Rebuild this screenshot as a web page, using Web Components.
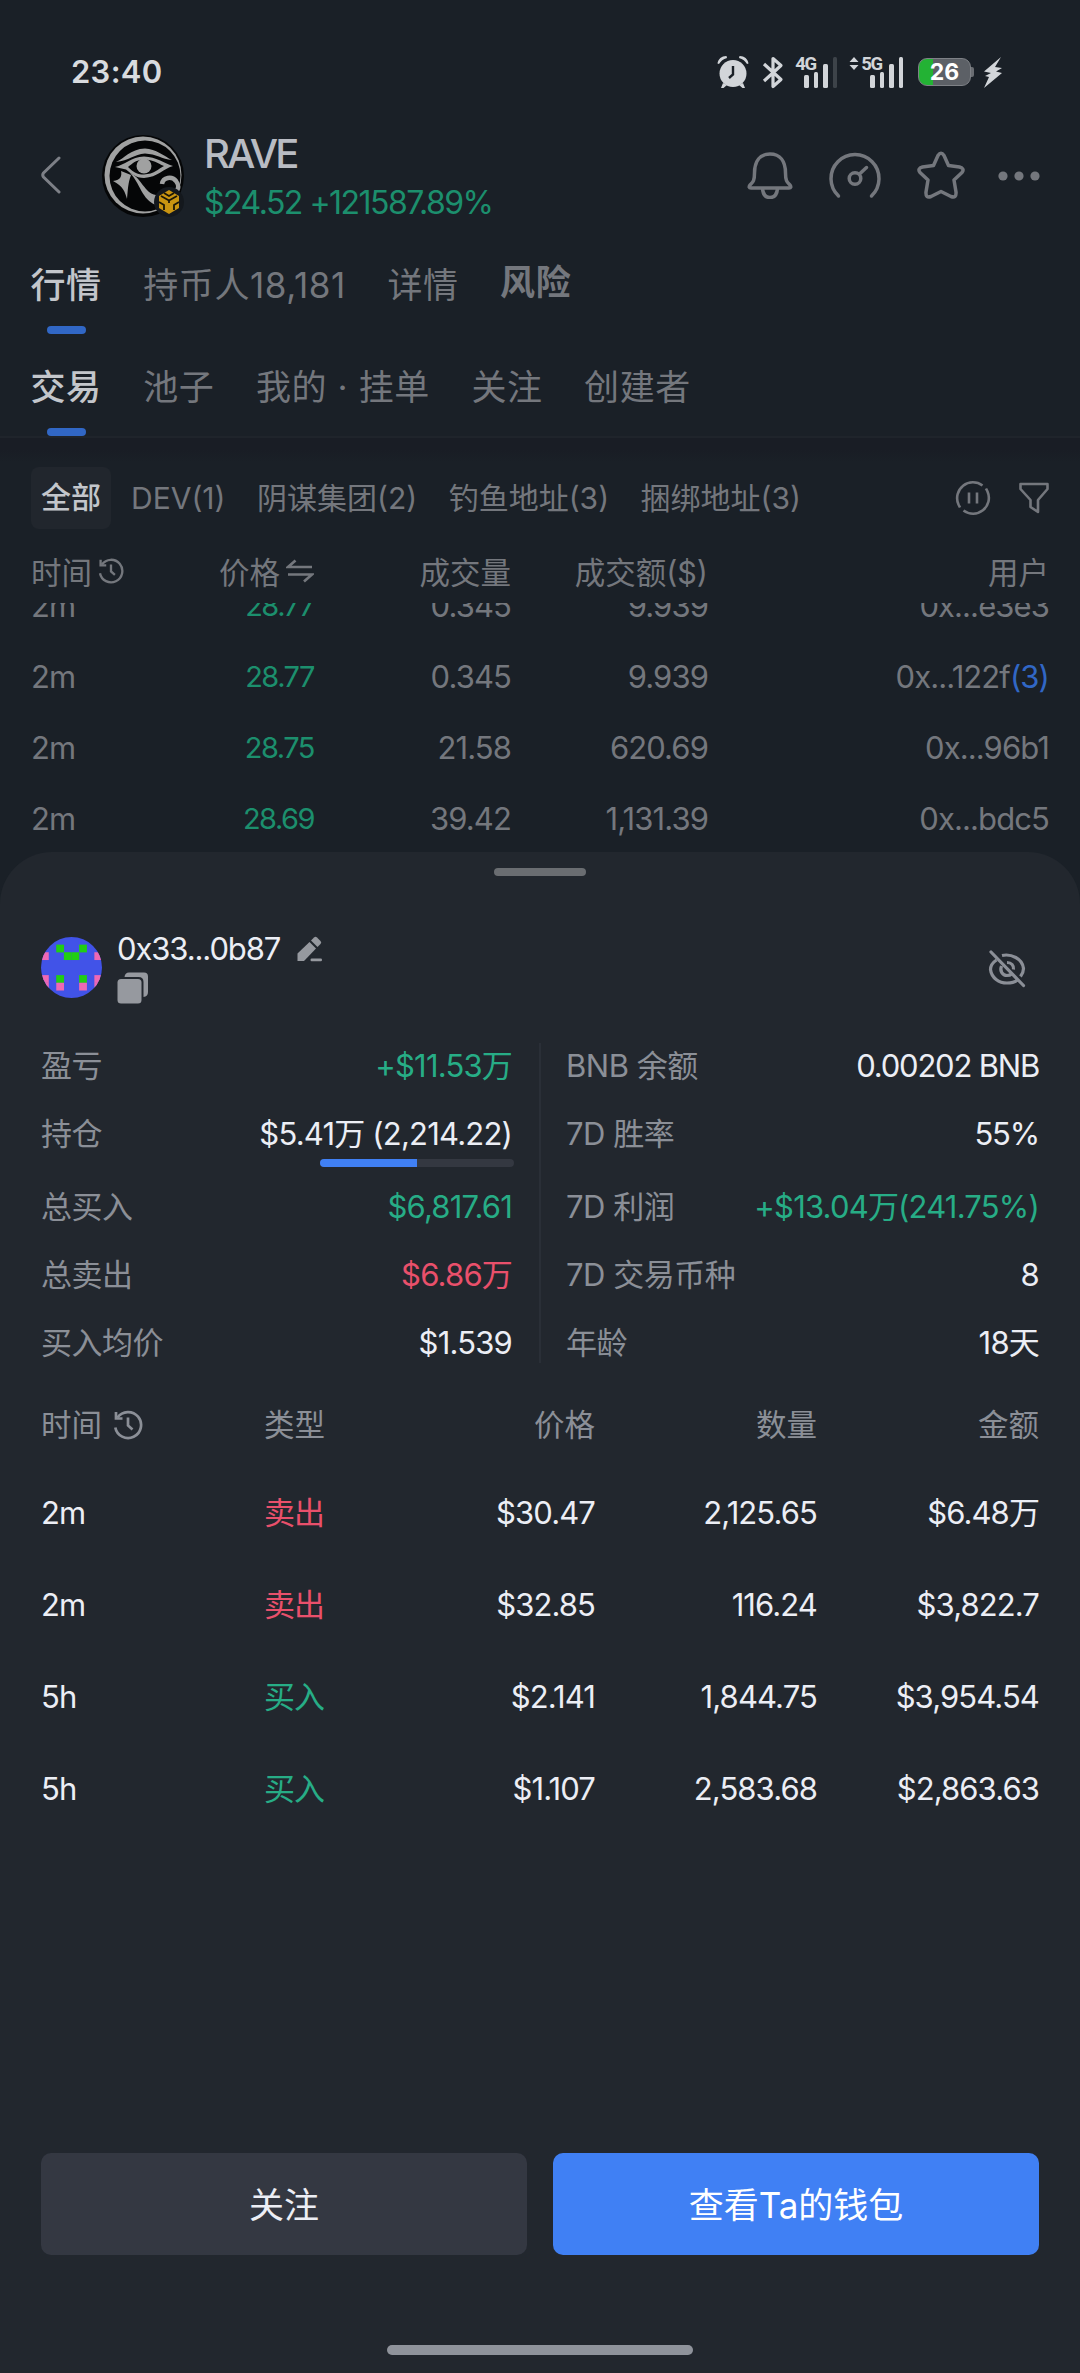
<!DOCTYPE html>
<html lang="zh-CN">
<head>
<meta charset="UTF-8">
<meta name="viewport" content="width=device-width, initial-scale=1.0">
<title>RAVE</title>
<style>
    body {
        margin: 0;
        width: 1080px;
        height: 2373px;
        overflow: hidden;
        background: #1a2027;
        color: #74777d;
        font-family: Inter, "Noto Sans CJK SC", sans-serif;
        font-size: 31px;
        line-height: 40px;
        letter-spacing: -0.9px;
        --green: #1c8f6d;
        --blue: #3167c5;
        --strong: #c3c6cb;
    }
    wallet-sheet {
        --green: #27ad86;
        --red: #e9506b;
        --blue: #4080f4;
        --strong: #eceef5;
        color: #8b8f97;
    }
</style>
</head>
<body>
<status-bar time="23:40" battery="26"></status-bar>
<token-header name="RAVE" price="$24.52 +121587.89%"></token-header>
<tab-bar>
    <tab-item active>行情</tab-item>
    <tab-item>持币人18,181</tab-item>
    <tab-item>详情</tab-item>
    <tab-item risk>风险</tab-item>
</tab-bar>
<tab-bar line>
    <tab-item active>交易</tab-item>
    <tab-item>池子</tab-item>
    <tab-item>我的 · 挂单</tab-item>
    <tab-item>关注</tab-item>
    <tab-item>创建者</tab-item>
</tab-bar>
<filter-bar></filter-bar>
<trade-list></trade-list>
<wallet-sheet>
    <wallet-head address="0x33...0b87"></wallet-head>
    <wallet-stats></wallet-stats>
    <wallet-trades></wallet-trades>
    <sheet-actions>
        <sheet-button>关注</sheet-button>
        <sheet-button primary>查看Ta的钱包</sheet-button>
    </sheet-actions>
</wallet-sheet>

<script>
// icon name -> [width, height, markup]
const ICONS = {
    alarm: [32, 34, `<g fill="#d2d5d9"><circle cx="16" cy="18.500" r="13.500"/><path d="M0.500 8.500C1 4 5 0.800 9.500 1L10 3C6 4 4 6 2 9ZM31.500 8.500C31 4 27 0.800 22.500 1L22 3C26 4 28 6 30 9Z"/><path d="M6 28L4 33L6.500 33L10 30ZM26 28L28 33L25.500 33L22 30Z"/></g><path d="M16 11V19.500L12 23" fill="none" stroke="#1a2027" stroke-width="2.400"/>`],
    bluetooth: [22, 33, `<path d="M2 8L19 23.500L11 30.500V2.500L19 9.500L2 25" fill="none" stroke="#d2d5d9" stroke-width="3.200" stroke-linejoin="round"/>`],
    bolt: [20, 33, `<path d="M18 1L1 15.500L8 17L2 20L6 21L1 32L19 17L13 15.500L19 12L12 11Z" fill="#d2d5d9"/>`],
    back: [22, 38, `<path d="M19 2L3.500 17Q2 19 3.500 21L19 36" fill="none" stroke="#7d8087" stroke-width="3" stroke-linecap="round"/>`],
    bell: [46, 48, `<g fill="none" stroke="#74777d" stroke-width="3.500" stroke-linejoin="round"><path d="M7.500 22C7.500 10 13 3 23 3S38.500 10 38.500 22C38.500 30 40 31 43 34Q45 37 42 37H4Q1 37 3 34C6 31 7.500 30 7.500 22Z"/><path d="M15.500 37.500C16 43.500 19 46.500 23 46.500S30 43.500 30.500 37.500"/></g>`],
    gauge: [52, 48, `<g fill="none" stroke="#74777d" stroke-width="3.500" stroke-linecap="round"><path d="M9.500 45A24 24 0 1 1 42.500 45"/><circle cx="26" cy="27.500" r="5.800"/><path d="M30.500 23L37.500 16.500"/></g>`],
    star: [48, 48, `<path d="M21 4.500Q24 0 27 4.500L31.500 14.500L42.500 16Q48 17.500 45 21.500L37 29L39 41Q39.500 47.500 34 45.500L24 40.500L14 45.500Q8.500 47.500 9 41L11 29L3 21.500Q0 17.500 5.500 16L16.500 14.500Z" fill="none" stroke="#74777d" stroke-width="3.500" stroke-linejoin="round"/>`],
    more: [42, 10, `<g fill="#74777d"><circle cx="5" cy="5" r="4.600"/><circle cx="21" cy="5" r="4.600"/><circle cx="37" cy="5" r="4.600"/></g>`],
    pause: [36, 36, `<g fill="none" stroke="#74777d" stroke-width="2.600"><path d="M27.500 5.500A15.800 15.800 0 0 0 3.500 24.500L5 27.500M8.500 30.500A15.800 15.800 0 0 0 32.500 11.500L31 8.500"/><path d="M14 12.500V23.500M22 12.500V23.500"/></g>`],
    filter: [30, 34, `<path d="M1.500 3H28.500V8L19 19V31L11.500 26V19L1.500 8Z" fill="none" stroke="#74777d" stroke-width="2.600" stroke-linejoin="round"/>`],
    swap: [28, 24, `<path d="M26 8H2L9.500 1.500M2 15.500H26L18 22.500" fill="none" stroke="#74777d" stroke-width="2.700"/>`],
    history: [30, 30, `<g fill="none" stroke="currentColor" stroke-width="2.700"><path d="M4.500 7.500A13 13 0 1 1 2.300 17.500"/><path d="M3 2V8.500H9.500"/><path d="M15 7.500V15.500L19.500 19.500"/></g>`],
    pencil: [26, 27, `<g fill="#96999f"><path d="M0.500 25V17.500L12.500 6L19 12.500L7.500 24.500Q7 25 6 25Z"/><path d="M14 4.500L17 1.500Q18.500 0.200 20 1.500L23.500 5Q25 6.500 23.500 8L20.500 11Z"/><rect x="13.500" y="22.500" width="11.500" height="2.800" rx="1.200"/></g>`],
    copy: [32, 32, `<g fill="#96999f"><path d="M7.500 5Q8 0.500 12 0.500H27Q31 0.500 31 4.500V20Q31 24.500 26.500 25V10Q26.500 5 21.500 5Z"/><rect x="0.500" y="7" width="24" height="24.500" rx="3.500"/></g>`],
    eye: [38, 38, `<g fill="none" stroke="#8b8f97" stroke-width="3.200"><path d="M8.500 10C4 13 2.500 16.500 2.500 19.500C3.500 28 11 33 19 33C23 33 27 32 29.500 30M14 5.500C23 3.500 34.500 8.500 35.500 18.500C35.500 22 34 24.500 32.500 26.500"/><path d="M13.500 16C11.500 21 14.500 25.500 19 25.500C21 25.500 22.500 25 23.500 24M19 12.500C23.500 12.500 26 15.500 25.500 19.500"/><path d="M3 2L35.500 35.500" stroke-linecap="round"/></g>`]
};

class SvgIcon extends HTMLElement {
    connectedCallback() {
        const [w, h, body] = ICONS[this.getAttribute("name")];
        const width = this.getAttribute("width") || w;
        this.attachShadow({ mode: "open" }).innerHTML = `
            <style>
                :host { display: block; flex: none; line-height: 0; }
            </style>
            <svg width="${width}" height="${h * width / w}" viewBox="0 0 ${w} ${h}">${body}</svg>
        `;
    }
}
customElements.define("svg-icon", SvgIcon);

// mobile signal: network label over four bars
class SignalBars extends HTMLElement {
    connectedCallback() {
        const level = Number(this.getAttribute("level"));
        const heights = [13, 16, 24, 31];
        this.attachShadow({ mode: "open" }).innerHTML = `
            <style>
                :host { display: flex; align-items: flex-end; gap: 5px; height: 31px; position: relative; }
                i { width: 4.5px; border-radius: 1.5px; background: #d2d5d9; }
                i.off { background: #3d4349; }
                b { position: absolute; right: 21px; top: -2px; font: 700 18.5px/18px Roboto, sans-serif; letter-spacing: -1.2px; color: #d2d5d9; display: flex; align-items: center; gap: 2px; }
            </style>
            <b>${this.hasAttribute("data-active") ? `<svg width="10" height="13" viewBox="0 0 10 13"><path d="M5 0L9.500 5H0.500ZM5 13L9.500 8H0.500Z" fill="#d2d5d9"/></svg>` : ""}${this.getAttribute("label")}</b>
            ${heights.map((h, i) => `<i class="${i < level ? "" : "off"}" style="height:${h}px"></i>`).join("")}
        `;
    }
}
customElements.define("signal-bars", SignalBars);

class StatusBar extends HTMLElement {
    connectedCallback() {
        this.attachShadow({ mode: "open" }).innerHTML = `
            <style>
                :host { display: flex; align-items: flex-start; box-sizing: border-box; height: 118px; padding: 52px 77px 0 71px; }
                .time { flex: 1; font-weight: 600; letter-spacing: 0.3px; color: #d8dbdf; }
                .row { display: flex; align-items: center; height: 34px; margin-top: 3px; }
                .battery { display: flex; align-items: center; margin-left: 15px; }
                .cell { box-sizing: border-box; width: 53px; height: 28px; border-radius: 9px; border: 1px solid #7e8186; background: linear-gradient(90deg, #23b234 28%, #5c6066 28%); color: #fff; text-align: center; font: 700 23px/26px Inter, sans-serif; letter-spacing: 0; }
                .tip { width: 3px; height: 10px; border-radius: 0 2px 2px 0; background: #6a6d72; }
            </style>
            <span class="time">${this.getAttribute("time")}</span>
            <div class="row">
                <svg-icon name="alarm"></svg-icon>
                <svg-icon name="bluetooth" style="margin-left:13px"></svg-icon>
                <signal-bars label="4G" level="3" style="margin-left:20px"></signal-bars>
                <signal-bars label="5G" level="4" data-active style="margin-left:33px"></signal-bars>
                <div class="battery"><div class="cell">${this.getAttribute("battery")}</div><div class="tip"></div></div>
                <svg-icon name="bolt" style="margin-left:9px"></svg-icon>
            </div>
        `;
    }
}
customElements.define("status-bar", StatusBar);

class TokenHeader extends HTMLElement {
    connectedCallback() {
        this.attachShadow({ mode: "open" }).innerHTML = `
            <style>
                :host { display: flex; align-items: center; box-sizing: border-box; height: 114px; padding: 0 40px; }
                .logo { margin: 2px 0 0 40px; line-height: 0; }
                .text { flex: 1; margin: 5px 0 0 19px; }
                .name { font-size: 40px; line-height: 50px; font-weight: 500; letter-spacing: -2.8px; color: #b9bcc3; }
                .price { font-size: 32px; line-height: 48px; letter-spacing: -1.5px; color: var(--green); white-space: nowrap; }
                .icons { display: flex; align-items: center; gap: 36px; }
            </style>
            <svg-icon name="back"></svg-icon>
            <div class="logo">
                <svg width="83" height="83" viewBox="0 0 83 83">
                    <circle cx="41" cy="41" r="41" fill="#050607"/>
                    <circle cx="41" cy="40" r="38.500" fill="#a0a1a1"/>
                    <circle cx="43" cy="41" r="35.500" fill="#050607"/>
                    <g fill="#a0a1a1">
                        <path d="M14 27C22 24 28 14 43 13.500C54 14 62 21 70 25C60 24 54 19 43 18.500C32 19 27 26 14 27Z"/>
                        <path fill-rule="evenodd" d="M13 32C23 30 29 22 42 21.500C55 22 61 28 71 31C61 34 56 42 42 43C34 43 28 38 24 34.500ZM26 32C32 38 36 39.500 42 39.500C52 39 56 34 62 31C55 28 52 25 42 24.500C33 25 30 29 26 32Z"/>
                        <circle cx="42" cy="31" r="7.500"/>
                        <path d="M19 36L29 40C26 48 26 54 25 64C23 57 21 51 11 46C19 45 20 41 19 36Z"/>
                        <path d="M28 38C40 43 42 58 54 60V70C40 65 38 48 28 38Z"/>
                    </g>
                    <path d="M60 49C61 42 70 41 74 46C77 50 77 54 74 56" fill="none" stroke="#a0a1a1" stroke-width="4.500"/>
                    <circle cx="67" cy="67" r="15" fill="#14181d"/>
                    <path d="M67 55L77 61V73L67 79L57 73V61Z" fill="#c99411"/>
                    <path d="M59 61L67 65.500L75 61M57 67L62 70V75M77 67L72 70V75M67 65.500V68M62 58L67 61L72 58" fill="none" stroke="#1a1608" stroke-width="1.800"/>
                </svg>
            </div>
            <div class="text">
                <div class="name">${this.getAttribute("name")}</div>
                <div class="price">${this.getAttribute("price")}</div>
            </div>
            <div class="icons">
                <svg-icon name="bell"></svg-icon>
                <svg-icon name="gauge"></svg-icon>
                <svg-icon name="star"></svg-icon>
                <svg-icon name="more" style="margin-left:-3px"></svg-icon>
            </div>
        `;
    }
}
customElements.define("token-header", TokenHeader);

class TabBar extends HTMLElement {
    connectedCallback() {
        this.attachShadow({ mode: "open" }).innerHTML = `
            <style>
                :host { display: flex; gap: 41.5px; height: 102px; padding-left: 30.5px; }
                :host([line]) { border-bottom: 2px solid #1f242b; }
            </style>
            <slot></slot>
        `;
    }
}
customElements.define("tab-bar", TabBar);

class TabItem extends HTMLElement {
    connectedCallback() {
        this.attachShadow({ mode: "open" }).innerHTML = `
            <style>
                :host { display: flex; flex-direction: column; align-items: center; justify-content: space-between; height: 102px; box-sizing: border-box; padding-top: 28px; font-size: 35px; line-height: 50px; letter-spacing: 0.6px; white-space: nowrap; }
                :host([active]) { color: var(--strong); font-weight: 500; }
                :host([risk]) { padding-top: 25px; font-weight: 700; }
                i { width: 39px; height: 8px; border-radius: 4px; }
                :host([active]) i { background: var(--blue); }
            </style>
            <span><slot></slot></span>
            <i></i>
        `;
    }
}
customElements.define("tab-item", TabItem);

class FilterBar extends HTMLElement {
    constructor() {
        super();
        this.attachShadow({ mode: "open" });
        this.filters = ["DEV(1)", "阴谋集团(2)", "钓鱼地址(3)", "捆绑地址(3)"];
    }
    connectedCallback() {
        this.shadowRoot.innerHTML = `
            <style>
                :host { display: flex; align-items: center; height: 62px; padding: 29px 31px 0; font-size: 30px; letter-spacing: 0; white-space: nowrap; background: linear-gradient(#191d25 12px, transparent 24px); }
                .all { width: 80px; height: 62px; line-height: 61px; border-radius: 8px; background: #21262d; color: var(--strong); text-align: center; font-weight: 500; margin-right: 20px; }
                .items { flex: 1; display: flex; gap: 31.5px; }
                .icons { display: flex; align-items: center; gap: 28px; }
            </style>
            <div class="all">全部</div>
            <div class="items">${this.filters.map(f => `<span>${f}</span>`).join("")}</div>
            <div class="icons"><svg-icon name="pause"></svg-icon><svg-icon name="filter"></svg-icon></div>
        `;
    }
}
customElements.define("filter-bar", FilterBar);

class TradeList extends HTMLElement {
    constructor() {
        super();
        this.attachShadow({ mode: "open" });
        this.rows = [
            ["2m", "28.77", "0.345", "9.939", "0x...e3e3"],
            ["2m", "28.77", "0.345", "9.939", "0x...122f", "(3)"],
            ["2m", "28.75", "21.58", "620.69", "0x...96b1"],
            ["2m", "28.69", "39.42", "1,131.39", "0x...bdc5"]
        ];
    }
    connectedCallback() {
        this.shadowRoot.innerHTML = `
            <style>
                :host { display: block; }
                .row { display: grid; grid-template-columns: 120px 163px 197px 197px 1fr; align-items: center; padding: 0 31px; height: 71px; text-align: right; white-space: nowrap; }
                .row > :first-child { text-align: left; justify-content: flex-start; }
                .head { height: 61px; padding-top: 13px; font-size: 30.5px; letter-spacing: 0; }
                .head span { display: flex; align-items: center; justify-content: flex-end; gap: 6px; }
                .head svg-icon { margin-top: -3px; }
                .body { height: 249px; overflow: hidden; }
                .body .row:first-child { margin-top: -33px; }
                .price { color: var(--green); font-size: 29px; letter-spacing: -1.5px; }
                b { font-weight: 400; color: var(--blue); }
            </style>
            <div class="row head">
                <span>时间<svg-icon name="history" width="26"></svg-icon></span>
                <span>价格<svg-icon name="swap"></svg-icon></span>
                <span>成交量</span><span>成交额($)</span><span>用户</span>
            </div>
            <div class="body">
                ${this.rows.map(r => `
                    <div class="row">
                        <span>${r[0]}</span><span${" "}class="price">${r[1]}</span><span>${r[2]}</span><span>${r[3]}</span>
                        <span>${r[4]}${r[5] ? `<b>${r[5]}</b>` : ""}</span>
                    </div>
                `).join("")}
            </div>
        `;
    }
}
customElements.define("trade-list", TradeList);

class WalletSheet extends HTMLElement {
    connectedCallback() {
        this.attachShadow({ mode: "open" }).innerHTML = `
            <style>
                :host { display: flex; flex-direction: column; box-sizing: border-box; height: 1521px; padding: 16px 41px 18px; border-radius: 52px 52px 0 0; background: #22272e; }
                .grip { width: 92px; height: 8px; border-radius: 4px; background: #6a6d71; margin: 0 auto; }
                .home { width: 306px; height: 10px; border-radius: 5px; background: #8f939b; margin: 90px auto 0; }
            </style>
            <div class="grip"></div>
            <slot></slot>
            <div class="home"></div>
        `;
    }
}
customElements.define("wallet-sheet", WalletSheet);

class WalletHead extends HTMLElement {
    connectedCallback() {
        // left/right mirrored 8x8 identicon
        const cells = [[2, 1, 1], [3, 2, 1], [0, 2, 0], [2, 5, 1], [0, 5, 0], [0, 6, 0], [2, 6, 0]];
        const rects = cells.map(([x, y, g]) => [x, 7 - x].map(cx =>
            `<rect x="${cx}" y="${y}" width="1.020" height="1.020" fill="${g ? "#21ce13" : "#ee68b4"}"/>`).join("")).join("");
        this.attachShadow({ mode: "open" }).innerHTML = `
            <style>
                :host { display: flex; align-items: flex-start; height: 70px; margin-top: 61px; }
                .avatar { width: 61px; height: 61px; border-radius: 50%; }
                .info { flex: 1; margin: -8px 0 0 15px; }
                .name { display: flex; align-items: center; gap: 17px; color: var(--strong); letter-spacing: -1.1px; }
                .name + svg-icon { margin-top: 3px; }
                .eye { margin: 13px 13px 0 0; }
            </style>
            <svg class="avatar" viewBox="0 0 8 8"><rect width="8" height="8" fill="#4153e8"/>${rects}</svg>
            <div class="info">
                <div class="name">${this.getAttribute("address")}<svg-icon name="pencil"></svg-icon></div>
                <svg-icon name="copy"></svg-icon>
            </div>
            <svg-icon class="eye" name="eye"></svg-icon>
        `;
    }
}
customElements.define("wallet-head", WalletHead);

class WalletStats extends HTMLElement {
    constructor() {
        super();
        this.attachShadow({ mode: "open" });
        this.left = [
            ["盈亏", "+$11.53万", "up"],
            ["持仓", "$5.41万 (2,214.22)", "bar"],
            ["总买入", "$6,817.61", "up"],
            ["总卖出", "$6.86万", "down"],
            ["买入均价", "$1.539", ""]
        ];
        this.right = [
            ["BNB 余额", "0.00202 BNB", "tight"],
            ["7D 胜率", "55%", "tight"],
            ["7D 利润", "+$13.04万(241.75%)", "up"],
            ["7D 交易币种", "8", ""],
            ["年龄", "18天", ""]
        ];
    }
    column(items) {
        return items.map(([label, value, kind]) => `
            <div class="row"><span class="label">${label}</span><span class="value ${kind}">${value}</span></div>
            ${kind === "bar" ? `<div class="track"><i></i></div>` : ""}
        `).join("");
    }
    render() {
        this.shadowRoot.innerHTML = `
            <style>
                :host { display: grid; grid-template-columns: 471px 1fr; height: 320px; margin-top: 36px; }
                .col { height: 320px; white-space: nowrap; }
                .right { border-left: 2px solid #2a2f37; margin-left: 27px; padding-left: 25px; }
                .row { display: flex; justify-content: space-between; height: 68px; line-height: 46px; }
                .row:nth-child(2) { height: 73px; }
                .row:has(+ .track) { height: 48px; }
                .track { width: 194px; height: 8px; margin: 0 -2px 17px auto; border-radius: 4px; background: #343841; overflow: hidden; }
                .track i { display: block; width: 50%; height: 100%; background: var(--blue); }
                .label { letter-spacing: -0.5px; }
                .value { color: var(--strong); letter-spacing: -0.8px; }
                .tight { letter-spacing: -1.2px; }
                .up { color: var(--green); }
                .down { color: var(--red); }
            </style>
            <div class="col">${this.column(this.left)}</div>
            <div class="col right">${this.column(this.right)}</div>
        `;
    }
    connectedCallback() {
        this.render();
    }
}
customElements.define("wallet-stats", WalletStats);

class WalletTrades extends HTMLElement {
    constructor() {
        super();
        this.attachShadow({ mode: "open" });
        this.trades = [
            { time: "2m", side: "卖出", price: "$30.47", amount: "2,125.65", total: "$6.48万" },
            { time: "2m", side: "卖出", price: "$32.85", amount: "116.24", total: "$3,822.7" },
            { time: "5h", side: "买入", price: "$2.141", amount: "1,844.75", total: "$3,954.54" },
            { time: "5h", side: "买入", price: "$1.107", amount: "2,583.68", total: "$2,863.63" }
        ];
    }
    connectedCallback() {
        this.shadowRoot.innerHTML = `
            <style>
                :host { display: block; flex: 1; margin-top: 20px; }
                .row { display: grid; grid-template-columns: 223px 106px 1fr 222px 222px; align-items: center; height: 92px; color: var(--strong); text-align: right; white-space: nowrap; }
                .row > :nth-child(-n+2) { text-align: left; }
                .head { height: 84px; color: inherit; font-size: 30.5px; letter-spacing: 0; }
                .head span:first-child { display: flex; align-items: center; gap: 11px; }
                .buy { color: var(--green); }
                .sell { color: var(--red); }
            </style>
            <div class="row head">
                <span>时间<svg-icon name="history"></svg-icon></span><span>类型</span><span>价格</span><span>数量</span><span>金额</span>
            </div>
            ${this.trades.map(t => `
                <div class="row">
                    <span>${t.time}</span><span class="${t.side === "买入" ? "buy" : "sell"}">${t.side}</span>
                    <span>${t.price}</span><span>${t.amount}</span><span>${t.total}</span>
                </div>
            `).join("")}
        `;
    }
}
customElements.define("wallet-trades", WalletTrades);

class SheetActions extends HTMLElement {
    connectedCallback() {
        this.attachShadow({ mode: "open" }).innerHTML = `
            <style>
                :host { display: grid; grid-template-columns: 1fr 1fr; gap: 26px; }
            </style>
            <slot></slot>
        `;
    }
}
customElements.define("sheet-actions", SheetActions);

class SheetButton extends HTMLElement {
    connectedCallback() {
        this.attachShadow({ mode: "open" }).innerHTML = `
            <style>
                :host { display: block; height: 102px; line-height: 104px; border-radius: 10px; background: #343842; color: #eceef5; font-size: 35px; letter-spacing: 0; text-align: center; }
                :host([primary]) { background: #4080f4; color: #fff; }
            </style>
            <slot></slot>
        `;
    }
}
customElements.define("sheet-button", SheetButton);
</script>
</body>
</html>
